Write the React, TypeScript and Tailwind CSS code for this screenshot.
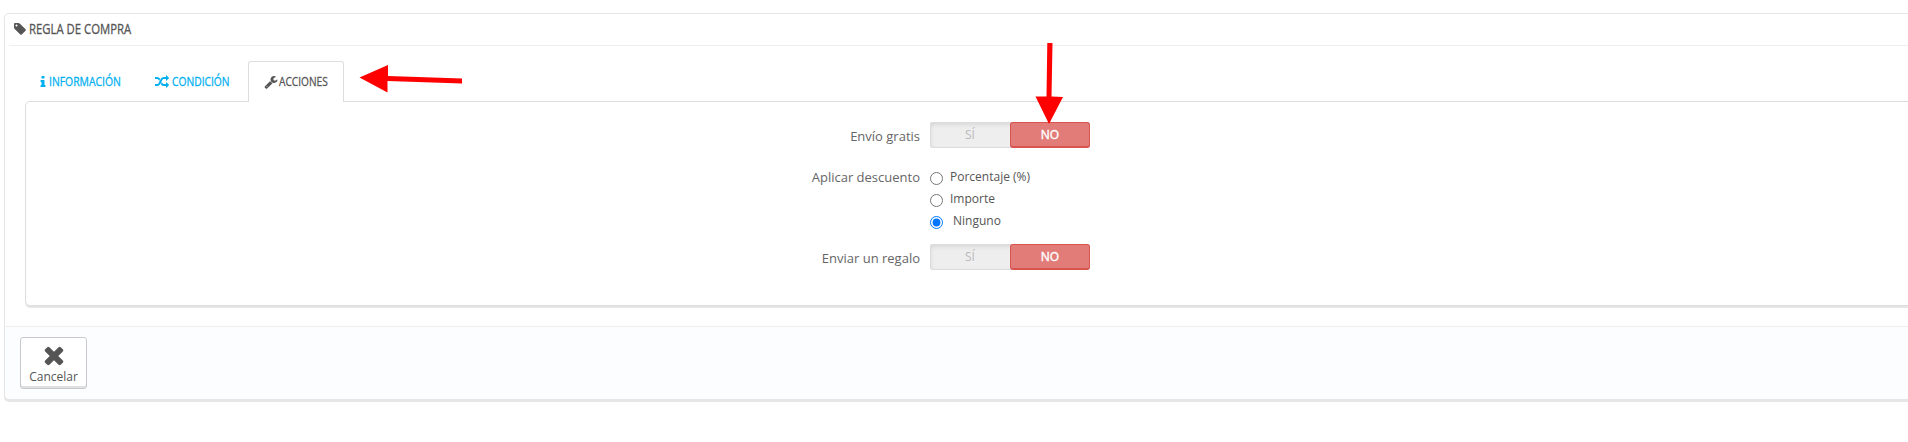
import { useState } from 'react'
import type { ReactNode } from 'react'

const icons = {
  tag: 'M576 448q0-53-37.5-90.5t-90.5-37.5-90.5 37.5-37.5 90.5 37.5 90.5 90.5 37.5 90.5-37.5 37.5-90.5zm1067 576q0 53-37 90l-491 492q-39 37-91 37-53 0-90-37l-715-716q-38-37-64.5-101t-26.5-117v-416q0-52 38-90t90-38h416q53 0 117 26.5t102 64.5l715 714q37 39 37 91z',
  info: 'M1216 1344v128q0 26-19 45t-45 19h-512q-26 0-45-19t-19-45v-128q0-26 19-45t45-19h64v-384h-64q-26 0-45-19t-19-45v-128q0-26 19-45t45-19h384q26 0 45 19t19 45v576h64q26 0 45 19t19 45zm-128-1152v192q0 26-19 45t-45 19h-256q-26 0-45-19t-19-45v-192q0-26 19-45t45-19h256q26 0 45 19t19 45z',
  random:
    'M666 481q-60 92-137 273-22-45-37-72.5t-40.5-63.5-51-56.5-63-35-81.5-14.5h-224q-14 0-23-9t-9-23v-192q0-14 9-23t23-9h224q250 0 410 225zm1126 799q0 14-9 23l-320 320q-9 9-23 9-13 0-22.5-9.5t-9.5-22.5v-192q-32 0-85 .5t-81 1-73-1-71-5-64-10.5-63-18.5-58-28.5-59-40-55-53.5-56-69.5q59-93 136-273 22 45 37 72.5t40.5 63.5 51 56.5 63 35 81.5 14.5h256v-192q0-14 9-23t23-9q12 0 24 10l319 319q9 9 9 23zm0-896q0 14-9 23l-320 320q-9 9-23 9-13 0-22.5-9.5t-9.5-22.5v-192h-256q-48 0-87 15t-69 45-51 61.5-45 77.5q-32 62-78 171-29 66-49.5 111t-54 105-64 100-74 83-90 68.5-106.5 42-128 16.5h-224q-14 0-23-9t-9-23v-192q0-14 9-23t23-9h224q48 0 87-15t69-45 51-61.5 45-77.5q32-62 78-171 29-66 49.5-111t54-105 64-100 74-83 90-68.5 106.5-42 128-16.5h256v-192q0-14 9-23t23-9q12 0 24 10l319 319q9 9 9 23z',
  wrench:
    'M448 1472q0-26-19-45t-45-19-45 19-19 45 19 45 45 19 45-19 19-45zm644-420l-682 682q-37 37-90 37-52 0-91-37l-106-108q-38-36-38-90 0-53 38-91l681-681q39 98 114.5 173.5t173.5 114.5zm634-435q0 39-23 106-47 134-164.5 217.5t-258.5 83.5q-185 0-316.5-131.5t-131.5-316.5 131.5-316.5 316.5-131.5q58 0 121.5 16.5t107.5 46.5q16 11 16 28t-16 28l-293 169v224l193 107q5-3 79-48.5t135.5-81 70.5-35.5q15 0 23.5 10t8.5 25z',
  times:
    'M1490 1322q0 40-28 68l-136 136q-28 28-68 28t-68-28l-294-294-294 294q-28 28-68 28t-68-28l-136-136q-28-28-28-68t28-68l294-294-294-294q-28-28-28-68t28-68l136-136q28-28 68-28t68 28l294 294 294-294q28-28 68-28t68 28l136 136q28 28 28 68t-28 68l-294 294 294 294q28 28 28 68z',
}

function Icon({ name, className = 'size-3.5' }: { name: keyof typeof icons; className?: string }) {
  return (
    <svg viewBox="0 0 1792 1792" fill="currentColor" className={`shrink-0 ${className}`}>
      <path d={icons[name]} />
    </svg>
  )
}

function Switch({ value, onChange }: { value: boolean; onChange: (v: boolean) => void }) {
  const off = 'text-[#bbb]'
  return (
    <div className="flex h-[26px] w-40 rounded-[3px] bg-[#eee] text-xs shadow-[inset_0_0_0_1px_#dcdcdc,inset_0_2px_5px_rgba(0,0,0,0.12)]">
      <button
        onClick={() => onChange(true)}
        className={`h-full w-20 rounded-[3px] pb-px ${value ? 'border border-b-2 border-[#5a9e5c] bg-[#92d097] text-white' : off}`}
      >
        SÍ
      </button>
      <button
        onClick={() => onChange(false)}
        className={`h-full w-20 rounded-[3px] ${value ? off : 'border border-b-2 border-[#d9534f] bg-[#e27c79] text-white [-webkit-text-stroke:0.4px]'}`}
      >
        NO
      </button>
    </div>
  )
}

function Row({ label, children }: { label: string; children: ReactNode }) {
  return (
    <div className="flex">
      <span className="w-[894px] pt-[5px] text-right text-[13px] leading-[18px] text-[#666]">{label}</span>
      <div className="ml-2.5">{children}</div>
    </div>
  )
}

const discounts = ['Porcentaje (%)', 'Importe', 'Ninguno']

export default function App() {
  const [freeShipping, setFreeShipping] = useState(false)
  const [gift, setGift] = useState(false)
  const [discount, setDiscount] = useState('Ninguno')

  return (
    <div className="relative h-[442px] w-full overflow-hidden bg-white pt-[13px] pl-1 font-['Open_Sans',sans-serif] text-[#555]">
      <div className="flex h-[387px] w-[1920px] flex-col rounded-[5px] border border-[#e6e6e6] bg-white shadow-[0_2px_0_#e6e6e6]">
        <div className="ml-1 flex h-8 shrink-0 items-center border-b border-[#eee] pb-px pl-1 text-sm">
          <Icon name="tag" />
          <span className="ml-0.5 origin-left scale-x-[0.81] whitespace-nowrap [-webkit-text-stroke:0.3px]">
            REGLA DE COMPRA
          </span>
        </div>

        <div className="relative z-10 mt-[15px] -mb-px ml-5 flex h-[41px] shrink-0 text-[13px] whitespace-nowrap text-[#00aff0] [-webkit-text-stroke:0.3px]">
          <a className="flex w-[114px] items-center pl-[11px]">
            <Icon name="info" />
            <span className="-ml-px origin-left scale-x-[0.8]">INFORMACIÓN</span>
          </a>
          <a className="flex w-[109px] items-center pl-4">
            <Icon name="random" />
            <span className="ml-[3px] origin-left scale-x-[0.79]">CONDICIÓN</span>
          </a>
          <a className="flex w-24 items-center rounded-t-[3px] border border-b-0 border-[#ddd] bg-white pl-[15px] text-[#555]">
            <Icon name="wrench" />
            <span className="ml-px origin-left scale-x-[0.78]">ACCIONES</span>
          </a>
        </div>

        <div className="ml-5 h-[205px] shrink-0 rounded-[5px] border border-[#ddd] pt-5 shadow-[0_2px_0_#e6e6e6]">
          <Row label="Envío gratis">
            <Switch value={freeShipping} onChange={setFreeShipping} />
          </Row>
          <div className="mt-[15px]">
            <Row label="Aplicar descuento">
              <div className="flex h-[81px] flex-col pt-1">
                {discounts.map((d) => (
                  <label key={d} className="flex h-[22px] text-xs leading-5">
                    <input
                      type="radio"
                      name="discount"
                      checked={discount === d}
                      onChange={() => setDiscount(d)}
                      className="mt-[5px] size-[13px]"
                    />
                    <span className={d === 'Ninguno' ? 'ml-2.5' : 'ml-[7px]'}>{d}</span>
                  </label>
                ))}
              </div>
            </Row>
          </div>
          <Row label="Enviar un regalo">
            <Switch value={gift} onChange={setGift} />
          </Row>
        </div>

        <div className="mt-5 flex-1 rounded-b-[5px] border-t border-[#eee] bg-[#fcfdfe] pt-2.5 pl-[15px]">
          <button className="flex h-[52px] w-[67px] flex-col items-center rounded-[3px] border border-[#c7c9cc] bg-white pt-[3px] text-xs shadow-[inset_0_-2px_0_#e0e0e0]">
            <Icon name="times" className="size-7" />
            <span className="leading-4">Cancelar</span>
          </button>
        </div>
      </div>

      {/* callout arrows */}
      <svg className="pointer-events-none absolute top-0 left-0 z-20" width="1908" height="442" fill="#f00">
        <path d="M359.5 77.5L388 65V76L462 78.5V83.5L387.5 81V92.5Z" />
        <path d="M1049 124L1035.5 96.5L1046.5 96.5L1047.3 43H1052.5L1051.5 96.5L1063 97Z" />
      </svg>
    </div>
  )
}
